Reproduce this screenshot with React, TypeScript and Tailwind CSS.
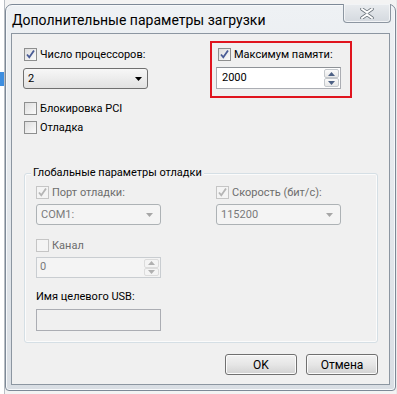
import React from 'react';

type CheckProps = {
  checked?: boolean;
  disabled?: boolean;
};

// чекбокс в стиле Win7
const Check = ({ checked, disabled }: CheckProps) => (
  <span
    className={
      disabled
        ? 'w-[13px] h-[13px] shrink-0 border border-[#c5c5c5] bg-[#f4f4f4] flex items-center justify-center'
        : 'w-[13px] h-[13px] shrink-0 border border-[#8e8f8f] bg-gradient-to-br from-[#dedede] to-[#fbfbfb] flex items-center justify-center'
    }
  >
    {checked && (
      <svg width="11" height="11" viewBox="0 0 11 11">
        <path
          d="M2 5.5 L4.3 8.3 L9 1.5"
          fill="none"
          stroke={disabled ? '#b5b5b5' : '#4a5c96'}
          strokeWidth="1.8"
        />
      </svg>
    )}
  </span>
);

type CheckRowProps = CheckProps & { label: string };

const CheckRow = ({ checked, disabled, label }: CheckRowProps) => (
  <div className="flex items-center h-[13px]">
    <Check checked={checked} disabled={disabled} />
    <span className={disabled ? 'ml-[3px] leading-[13px] text-[#6d6d6d]' : 'ml-[3px] leading-[13px] text-black'}>
      {label}
    </span>
  </div>
);

const Arrow = ({ color, w = 7, h = 4 }: { color: string; w?: number; h?: number }) => (
  <svg width={w} height={h} viewBox={`0 0 ${w} ${h}`}>
    <path d={`M0 0 L${w} 0 L${w / 2} ${h} Z`} fill={color} />
  </svg>
);

const Select = ({ value, disabled }: { value: string; disabled?: boolean }) => (
  <div
    className={
      disabled
        ? 'w-[125px] h-[21px] rounded-[3px] border border-[#adb2b5] bg-[#f4f4f4] flex items-center pl-[4px] pr-[7px] text-[#7a7a7a]'
        : 'w-[125px] h-[21px] rounded-[3px] border border-[#707070] bg-gradient-to-b from-[#f7f7f7] to-[#e2e2e2] flex items-center pl-[4px] pr-[5px] text-black'
    }
  >
    <span className="flex-1 leading-none">{value}</span>
    <Arrow color={disabled ? '#a6a6a6' : '#000000'} />
  </div>
);

const SpinBtn = ({ up, disabled }: { up?: boolean; disabled?: boolean }) => (
  <div
    className={
      disabled
        ? 'flex-1 w-[15px] border border-[#dcdcdc] rounded-[2px] bg-[#f4f4f4] flex items-center justify-center'
        : 'flex-1 w-[15px] border border-[#c4c8cc] rounded-[2px] bg-gradient-to-b from-[#fbfbfb] to-[#e8e8e8] flex items-center justify-center'
    }
  >
    <svg width="7" height="4" viewBox="0 0 7 4" className={up ? 'rotate-180' : ''}>
      <path d="M0 0 L7 0 L3.5 4 Z" fill={disabled ? '#b0b0b0' : '#4d6185'} />
    </svg>
  </div>
);

const Spin = ({ value, disabled }: { value: string; disabled?: boolean }) => (
  <div
    className={
      disabled
        ? 'w-[125px] h-[21px] border border-[#c9cdd1] bg-[#f4f4f4] flex items-stretch text-[#7a7a7a]'
        : 'w-[125px] h-[22px] border border-[#abadb3] border-t-[#8e9297] bg-white flex items-stretch text-black'
    }
  >
    <span className={disabled ? 'flex-1 flex items-center pl-[3px]' : 'flex-1 flex items-center pl-[5px]'}>{value}</span>
    <div className="flex flex-col py-[1px] pr-[1px]">
      <SpinBtn up disabled={disabled} />
      <SpinBtn disabled={disabled} />
    </div>
  </div>
);

const Button = ({ label }: { label: string }) => (
  <div className="w-[72px] h-[21px] rounded-[3px] border border-[#707070] bg-gradient-to-b from-[#f2f2f2] via-[#e6e6e6] to-[#d2d2d2] flex items-center justify-center text-black shadow-[inset_0_0_0_1px_#fbfbfb]">
    {label}
  </div>
);

export default function App() {
  return (
    <div
      className="w-[397px] h-[394px] bg-[#f3f3f3] flex overflow-hidden text-[11px]"
      style={{ fontFamily: 'Roboto, "Noto Sans", sans-serif' }}
    >
      {/* кусок окна на заднем плане */}
      <div className="w-[5px] shrink-0 bg-white border-r border-[#b9bec4] flex flex-col">
        <div className="h-[72px]" />
        <div className="h-[14px] bg-[#3d8ee0]" />
      </div>

      {/* окно диалога */}
      <div className="mt-[4px] w-[391px] h-[387px] shrink-0 rounded-t-[7px] rounded-b-[4px] border border-[#7d8997] bg-gradient-to-b from-[#eef1f4] via-[#e4e8ec] to-[#d9dee4] shadow-[inset_0_0_0_1px_#f7f9fb] flex flex-col pl-[5px] pr-[6px]">
        <div className="h-[28px] flex items-start relative">
          <span className="mt-[7px] ml-[1px] text-[14px] leading-[17px] text-black">
            Дополнительные параметры загрузки
          </span>
          <div className="absolute right-[-2px] top-[-1px] w-[48px] h-[19px] rounded-b-[4px] border border-[#8c96a1] border-t-0 bg-gradient-to-b from-[#e9ecef] to-[#d4d9df] shadow-[inset_0_0_0_1px_#f2f4f6] flex items-center justify-center">
            <svg width="14" height="11" viewBox="0 0 14 11">
              <path
                d="M2 1 L7 4.6 L12 1 M2 10 L7 6.4 L12 10"
                stroke="#6c747c"
                strokeWidth="3.6"
                fill="none"
                strokeLinecap="round"
              />
              <path
                d="M2 1 L7 4.6 L12 1 M2 10 L7 6.4 L12 10"
                stroke="#ffffff"
                strokeWidth="2"
                fill="none"
                strokeLinecap="round"
              />
            </svg>
          </div>
        </div>

        {/* клиентская область */}
        <div className="w-[379px] h-[352px] border border-[#8c96a1] bg-[#f0f0f0] flex flex-col">
          <div className="flex mt-[7px]">
            <div className="ml-[11px] w-[187px] pt-[7px] flex flex-col">
              <div className="ml-[1px]">
                <CheckRow checked label="Число процессоров:" />
              </div>
              <div className="mt-[7px]">
                <Select value="2" />
              </div>
            </div>
            <div className="w-[142px] h-[57px] border-2 border-[#e0141e] pl-[4px] pt-[5px] flex flex-col">
              <div className="ml-[2px]">
                <CheckRow checked label="Максимум памяти:" />
              </div>
              <div className="mt-[6px]">
                <Spin value="2000" />
              </div>
            </div>
          </div>

          <div className="ml-[12px] mt-[4px]">
            <CheckRow label="Блокировка PCI" />
          </div>
          <div className="ml-[12px] mt-[6px]">
            <CheckRow label="Отладка" />
          </div>

          {/* группа */}
          <div className="ml-[12px] mt-[39px] w-[354px] h-[170px] relative rounded-[3px] border border-[#d5dfe5] shadow-[inset_0_0_0_1px_#fbfbfb] flex flex-col pl-[11px] pt-[12px]">
            <span className="absolute left-[6px] top-[-8px] px-[2px] bg-[#f0f0f0] leading-[14px] text-black">
              Глобальные параметры отладки
            </span>
            <div className="flex">
              <div className="w-[180px] flex flex-col">
                <CheckRow checked disabled label="Порт отладки:" />
                <div className="mt-[5px]">
                  <Select value="COM1:" disabled />
                </div>
              </div>
              <div className="flex flex-col">
                <CheckRow checked disabled label="Скорость (бит/с):" />
                <div className="mt-[5px]">
                  <Select value="115200" disabled />
                </div>
              </div>
            </div>
            <div className="mt-[14px]">
              <CheckRow disabled label="Канал" />
            </div>
            <div className="mt-[5px]">
              <Spin value="0" disabled />
            </div>
            <div className="mt-[12px] leading-[14px] text-black">Имя целевого USB:</div>
            <div className="mt-[5px] w-[125px] h-[22px] border border-[#abadb3] bg-[#f0f0f0]" />
          </div>

          <div className="flex justify-end gap-[9px] mr-[11px] mt-[11px] text-[12px]">
            <Button label="OK" />
            <Button label="Отмена" />
          </div>
        </div>
      </div>

      <div className="flex-1 bg-[#e9e9e9]" />
    </div>
  );
}
